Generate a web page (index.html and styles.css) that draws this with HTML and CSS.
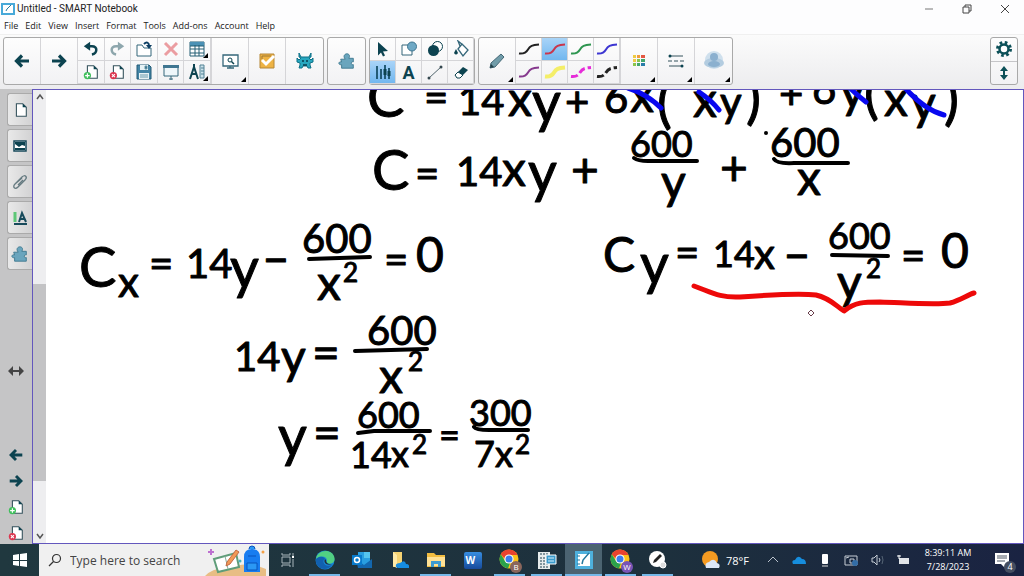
FILE: index.html
```html
<!DOCTYPE html>
<html lang="en">
<head>
<meta charset="utf-8">
<title>Untitled - SMART Notebook</title>
<link rel="stylesheet" href="styles.css">
</head>
<body>
<svg class="defs" aria-hidden="true">
  <defs>
    <symbol id="left" viewBox="0 0 20 20"><path d="M17 10H5M10 4.500 4.500 10 10 15.500" fill="none" stroke="#0c4350" stroke-width="3.200"/></symbol>
    <symbol id="right" viewBox="0 0 20 20"><path d="M3 10h12M10 4.500 15.500 10 10 15.500" fill="none" stroke="#0c4350" stroke-width="3.200"/></symbol>
    <symbol id="page" viewBox="0 0 20 20"><path d="M6 3h7l4 4v10H6z" fill="#fff" stroke="#35525c" stroke-width="1.200"/><path d="M13 3v4h4z" fill="#0c4350"/></symbol>
    <symbol id="page-add" viewBox="0 0 20 20"><use href="#page"/><circle cx="6" cy="14" r="4" fill="#3fbf5c"/><path d="M6 11.500v5M3.500 14h5" stroke="#fff" stroke-width="1.300"/></symbol>
    <symbol id="page-del" viewBox="0 0 20 20"><use href="#page"/><circle cx="6" cy="14" r="4" fill="#dc3750"/><path d="m4.300 12.300 3.400 3.400m0-3.400-3.400 3.400" stroke="#fff" stroke-width="1.200"/></symbol>
    <symbol id="puzzle" viewBox="0 0 20 20"><path d="M3 8h5C5 4 8 2 10 2s4 2 2 5h5v4c-3-1-3 4 0 3v4H4v-4C0 15 0 10 4 11z" fill="#6aa5bd" stroke="#3d788f"/></symbol>
    <symbol id="undo" viewBox="0 0 20 20"><path d="M5 7h6c7 0 6 8 0 9" fill="none" stroke="#0c4350" stroke-width="2.800"/><path d="M2 7l7-5v10z" fill="#0c4350"/></symbol>
    <symbol id="curve" viewBox="0 0 22 14"><path d="M1 11.500C5 12 8 11 10 7.500S14 3 21 2.500" fill="none" stroke="currentColor"/></symbol>
    <symbol id="chrome" viewBox="0 0 22 22"><circle cx="10" cy="10" r="9.500" fill="#fbc318"/><path d="M1.800 5.200A9.500 9.500 0 0 1 18.500 6H10a4 4 0 0 0-4 4z" fill="#e8432f"/><path d="M1.800 5.200 6 12a5 5 0 0 0 5 2l-2 5.500A9.500 9.500 0 0 1 1.800 5.200" fill="#2ba24c"/><circle cx="10" cy="10" r="4.600" fill="#fff"/><circle cx="10" cy="10" r="3.500" fill="#3b7ded"/></symbol>
  </defs>
</svg>
<div class="app">
  <header class="titlebar">
    <svg class="icon-s" viewBox="0 0 14 14" aria-hidden="true"><path d="M0 1h14v12H0z" fill="#48a9d9"/><path d="M2 3h10v8H2z" fill="#fff"/><path d="m5 9 1-2 4-4" stroke="#25789e" fill="none"/></svg>
    <h1 class="title">Untitled - SMART Notebook</h1>
    <div class="window-buttons">
      <button class="window-button" aria-label="Minimize"><svg class="icon-s" viewBox="0 0 14 14"><path d="M3 7h8" stroke="#777"/></svg></button>
      <button class="window-button" aria-label="Restore"><svg class="icon-s" viewBox="0 0 14 14"><path d="M3 5h6v6H3zM5 5V3h6v6H9" fill="none" stroke="#444"/></svg></button>
      <button class="window-button" aria-label="Close"><svg class="icon-s" viewBox="0 0 14 14"><path d="m3 3 8 8m0-8-8 8" stroke="#444"/></svg></button>
    </div>
  </header>
  <nav class="menubar" aria-label="Menu">
    <button class="menu">File</button><button class="menu">Edit</button><button class="menu">View</button><button class="menu">Insert</button><button class="menu">Format</button><button class="menu">Tools</button><button class="menu">Add-ons</button><button class="menu">Account</button><button class="menu">Help</button>
  </nav>
  <div class="toolbar" role="toolbar" aria-label="Tools">
    <div class="group">
      <button class="tool" aria-label="Previous page"><svg class="icon"><use href="#left"/></svg></button>
      <button class="tool" aria-label="Next page"><svg class="icon"><use href="#right"/></svg></button>
      <div class="pairs pairs-5">
        <button class="tool" aria-label="Undo"><svg class="icon-m"><use href="#undo"/></svg></button>
        <button class="tool" aria-label="Redo"><svg class="icon-m faded flip"><use href="#undo"/></svg></button>
        <button class="tool" aria-label="Open"><svg class="icon-m" viewBox="0 0 18 18"><path d="M2 5h5l2 3h7v8H2z" fill="#fff" stroke="#35677a"/><path d="M9 4c3-3 5-1 5 2" fill="none" stroke="#0c3d62" stroke-width="2"/><path d="M11 5h6l-3 4z" fill="#0c3d62"/></svg></button>
        <button class="tool" aria-label="Delete"><svg class="icon-m" viewBox="0 0 18 18"><path d="m3 3 12 12m0-12L3 15" stroke="#eb9da1" stroke-width="3"/></svg></button>
        <button class="tool more" aria-label="Table"><svg class="icon-m" viewBox="0 0 18 18"><path d="M2 2h14v14H2z" fill="#fff" stroke="#245f75"/><path d="M2 2h14v4H2z" fill="#4b91b5"/><path d="M2 6h14M2 9h14M2 13h14M7 5v11M11 5v11" stroke="#245f75"/></svg></button>
        <button class="tool" aria-label="Add page"><svg class="icon-m"><use href="#page-add"/></svg></button>
        <button class="tool" aria-label="Delete page"><svg class="icon-m"><use href="#page-del"/></svg></button>
        <button class="tool" aria-label="Save"><svg class="icon-m" viewBox="0 0 18 18"><path d="M2 2h12l2 2v12H2z" fill="#4485a6" stroke="#235b76"/><path d="M5 2h8v5H5zM4 10h10v6H4z" fill="#e7f2f5"/><path d="M10 3h2v3h-2zM5 12h8M5 14h8" fill="#235b76" stroke="#6a9bad"/></svg></button>
        <button class="tool" aria-label="Screen shade"><svg class="icon-m" viewBox="0 0 18 18"><path d="M2 4h14v9H2z" fill="#eef6fa" stroke="#35677a"/><path d="M1 2h16v3H1z" fill="#3f7691"/><path d="M9 13v4M7 16h4" stroke="#35677a"/></svg></button>
        <button class="tool more" aria-label="Measurement tools"><svg class="icon-m" viewBox="0 0 18 18"><path d="m2 16 4-12 4 12M6 1v4M3 11h6" fill="none" stroke="#0c4350" stroke-width="2"/><path d="M12 2h4v13h-4z" fill="#cbe2eb" stroke="#528294"/><path d="M13 5h3m-3 3h3m-3 3h3" stroke="#528294"/></svg></button>
      </div>
      <button class="tool more" aria-label="Screen"><svg class="icon" viewBox="0 0 20 20"><path d="M3 4h15v11H3zM10 15v2M7 17h7" fill="#fff" stroke="#35677a" stroke-width="1.300"/><circle cx="10" cy="9" r="2" fill="none" stroke="#0c4350"/><path d="m11.500 10.500 2.500 2.500" stroke="#0c4350" stroke-width="1.500"/></svg></button>
      <button class="tool" aria-label="Response"><svg class="icon" viewBox="0 0 20 20"><path d="M3 3h14v14H3z" fill="#eeb344" stroke="#b58637"/><path d="m5 9 4 4 8-8" fill="none" stroke="#fff" stroke-width="3"/><path d="M5 8v-3h9" stroke="#9f7832" fill="none"/></svg></button>
      <button class="tool" aria-label="Activity builder"><svg class="icon" viewBox="0 0 20 20"><path d="M6 6 4 2v4l2 1-2 2-2-2v4l3 1v2l-1 3h3l1-2h4l1 2h3l-1-3v-2l3-1V7l-2 2-2-2 2-1V2l-2 4z" fill="#27a7bf" stroke="#0e7187"/><path d="M8 9v2M12 9v2M8 14h4" stroke="#073e50" stroke-width="1.500"/></svg></button>
    </div>
    <div class="group"><button class="tool" aria-label="Add-ons"><svg class="icon-m"><use href="#puzzle"/></svg></button></div>
    <div class="group">
      <div class="pairs pairs-4">
        <button class="tool" aria-label="Select"><svg class="icon-m" viewBox="0 0 18 18"><path d="m4 2 10 9-5 .500 2 4-2 1-2-4-3 3z" fill="#0c4350"/></svg></button>
        <button class="tool" aria-label="Shapes"><svg class="icon-m" viewBox="0 0 18 18"><path d="M2 5h10v10H2z" fill="#fff" stroke="#35677a"/><circle cx="12" cy="6.500" r="4.500" fill="#6fa9c5" stroke="#3f7691"/></svg></button>
        <button class="tool" aria-label="Fill style"><svg class="icon-m" viewBox="0 0 18 18"><circle cx="11.500" cy="6.500" r="5" fill="#fff" stroke="#0c4350"/><circle cx="7.500" cy="10.500" r="5.500" fill="#0c4350"/></svg></button>
        <button class="tool" aria-label="Fill"><svg class="icon-m" viewBox="0 0 18 18"><path d="m6 9 4-5 6 6-5 6zM8 6 6 1l5 4" fill="#fff" stroke="#35677a" stroke-width="1.300"/><path d="M4 9 2 13q2 3 4 0z" fill="#0c4350"/></svg></button>
        <button class="tool selected" aria-label="Pens"><svg class="icon-m" viewBox="0 0 18 18"><path d="M3 3v13M7 6v10M11 2v14M15 5v11" stroke="#235b76" stroke-width="2"/><path d="M11 6v6M15 8v5" stroke="#0c4350" stroke-width="3"/></svg></button>
        <button class="tool letter" aria-label="Text">A</button>
        <button class="tool" aria-label="Line"><svg class="icon-m" viewBox="0 0 18 18"><path d="M3 15 15 4" stroke="#52666e"/><circle cx="3" cy="15" r="1.500" fill="#34474f"/><circle cx="15" cy="4" r="1.500" fill="#34474f"/></svg></button>
        <button class="tool" aria-label="Eraser"><svg class="icon-m" viewBox="0 0 18 18"><path d="m3 12 8-8 5 3-8 8H5z" fill="#0c4350"/><path d="m3 12 3-3 5 3-3 3H5z" fill="#fff" stroke="#0c4350"/></svg></button>
      </div>
    </div>
    <div class="group">
      <button class="tool more" aria-label="Pen type"><svg class="icon" viewBox="0 0 20 20"><path d="m3 17 1-5 10-9 3 3-9 10z" fill="#719ca9" stroke="#446876"/><path d="m3 17 1-4 3 3z" fill="#223f48"/></svg></button>
      <div class="pairs pairs-4">
        <button class="tool ink-black" aria-label="Black pen"><svg class="swatch"><use href="#curve"/></svg></button>
        <button class="tool selected ink-red" aria-label="Red pen"><svg class="swatch"><use href="#curve"/></svg></button>
        <button class="tool ink-green" aria-label="Green pen"><svg class="swatch"><use href="#curve"/></svg></button>
        <button class="tool ink-blue" aria-label="Blue pen"><svg class="swatch"><use href="#curve"/></svg></button>
        <button class="tool ink-purple" aria-label="Purple pen"><svg class="swatch"><use href="#curve"/></svg></button>
        <button class="tool ink-yellow" aria-label="Yellow highlighter"><svg class="swatch wide"><use href="#curve"/></svg></button>
        <button class="tool ink-magenta" aria-label="Magenta dashes"><svg class="swatch dashed"><use href="#curve"/></svg></button>
        <button class="tool ink-black" aria-label="Black dashes"><svg class="swatch dashed"><use href="#curve"/></svg></button>
      </div>
      <button class="tool more" aria-label="Color"><svg class="icon" viewBox="0 0 20 20"><path d="M4 4h3v3H4zM4 8h3v3H4z" fill="#efcb43"/><path d="M8 4h3v3H8z" fill="#f09d3a"/><path d="M12 4h4v3h-4z" fill="#e45842"/><path d="M8 8h3v3H8zM4 12h3v3H4z" fill="#8bc54b"/><path d="M12 8h4v3h-4zM8 12h3v3H8z" fill="#43a76b"/><path d="M12 12h4v3h-4z" fill="#287da8"/></svg></button>
      <button class="tool more" aria-label="Line style"><svg class="icon" viewBox="0 0 20 20"><path d="M3 5h14M3 15h14" stroke="#35525c"/><path d="M2 10h16" stroke="#35525c" stroke-dasharray="4 2"/><circle cx="4" cy="5" r="1.500" fill="#0c4350"/><circle cx="16" cy="15" r="1.500" fill="#0c4350"/></svg></button>
      <button class="tool more" aria-label="Transparency"><svg class="icon-l" viewBox="0 0 24 24"><circle cx="12" cy="11" r="9" fill="#cfe0ed"/><ellipse cx="12" cy="14" rx="10" ry="5" fill="#b3cce0"/><circle cx="12" cy="8" r="4" fill="#8bb0cf"/><ellipse cx="12" cy="15" rx="6" ry="3" fill="#8bb0cf"/></svg></button>
    </div>
    <div class="group stack">
      <button class="tool" aria-label="Settings"><svg class="icon-m" viewBox="0 0 18 18"><circle cx="9" cy="9" r="6.500" fill="none" stroke="#0c5058" stroke-width="3" stroke-dasharray="2.600 2.500"/><circle cx="9" cy="9" r="4.500" fill="#fff" stroke="#0c5058" stroke-width="2.500"/></svg></button>
      <button class="tool" aria-label="Move toolbar"><svg class="icon-m" viewBox="0 0 18 18"><path d="M9 5v8" stroke="#0c5058" stroke-width="2"/><path d="m9 2 4 5H5zM9 16l4-5H5z" fill="#0c5058"/></svg></button>
    </div>
  </div>
  <main class="workspace">
    <aside class="sidebar">
      <button class="tab" aria-label="Page sorter"><svg class="icon-m"><use href="#page"/></svg></button>
      <button class="tab" aria-label="Gallery"><svg class="icon-m" viewBox="0 0 18 18"><path d="M3 4h12v10H3z" fill="#fff" stroke="#174a5b" stroke-width="1.500"/><path d="M4 5h10v4l-3-1-3 2-4-3zM4 11h10v2H4z" fill="#0c4350"/></svg></button>
      <button class="tab" aria-label="Attachments"><svg class="icon-m" viewBox="0 0 18 18"><path d="m4 11 7-7c3-3 6 0 3 3l-7 7c-3 3-6 0-3-3l7-6M7 12l5-5" fill="none" stroke="#667b81" stroke-width="1.300"/></svg></button>
      <button class="tab" aria-label="Properties"><svg class="icon-m" viewBox="0 0 18 18"><path d="M4 3v10" stroke="#5ec777" stroke-width="3"/><path d="m8 13 3-9 4 9M9 10h5M3 15h13" fill="none" stroke="#174a5b" stroke-width="2"/></svg></button>
      <button class="tab" aria-label="Add-ons"><svg class="icon-m"><use href="#puzzle"/></svg></button>
      <button class="side-button resize" aria-label="Resize sidebar"><svg class="icon-m" viewBox="0 0 18 18"><path d="M4 9h10" stroke="#444" stroke-width="2"/><path d="m1 9 5-5v10zM17 9l-5-5v10z" fill="#444"/></svg></button>
      <div class="side-nav">
        <button class="side-button" aria-label="Previous page"><svg class="icon-m"><use href="#left"/></svg></button>
        <button class="side-button" aria-label="Next page"><svg class="icon-m"><use href="#right"/></svg></button>
        <button class="side-button" aria-label="Add page"><svg class="icon-m"><use href="#page-add"/></svg></button>
        <button class="side-button" aria-label="Delete page"><svg class="icon-m"><use href="#page-del"/></svg></button>
      </div>
    </aside>
    <section class="board" aria-label="Page">
      <div class="scrollbar">
        <svg class="arrow" viewBox="0 0 12 12"><path d="m3 8 3-4 3 4" fill="none" stroke="#555" stroke-width="1.500"/></svg>
        <div class="track"><div class="thumb"></div></div>
        <svg class="arrow" viewBox="0 0 12 12"><path d="m3 4 3 4 3-4" fill="none" stroke="#555" stroke-width="1.500"/></svg>
      </div>
      <svg class="canvas">
        <g transform="translate(-46 -90)">
          <g class="ink">
            <text x="367" y="117" class="tall">C</text><text x="424" y="112">=</text><text x="458" y="115" class="mid">14</text><text x="508" y="116" class="big">x</text><text x="532" y="122" class="tall">y</text><text x="565" y="117">+</text><text x="604" y="113">6</text><text x="630" y="112" class="big">x</text><text x="657" y="122" class="tall">(</text><text x="693" y="117" class="big">x</text><text x="720" y="117">y</text><text x="746" y="118" class="tall">)</text><text x="779" y="109">+</text><text x="812" y="104">6</text><text x="840" y="108" class="big">y</text><text x="864" y="113" class="tall">(</text><text x="884" y="116" class="big">x</text><text x="911" y="120" class="big">y</text><text x="944" y="119" class="tall">)</text>
            <text x="372" y="190" class="tall">C</text><text x="415" y="188">=</text><text x="456" y="186" class="mid">14</text><text x="502" y="186" class="big">x</text><text x="528" y="192" class="tall">y</text><text x="571" y="187" class="big">+</text><text x="630" y="157" class="small">600</text><text x="661" y="199" class="big">y</text><text x="720" y="185" class="big">+</text><text x="770" y="157" class="mid">600</text><text x="797" y="195" class="big">x</text>
            <text x="79" y="287" class="tall">C</text><text x="118" y="297">x</text><text x="149" y="278">=</text><text x="186" y="278" class="mid">14</text><text x="230" y="288" class="tall">y</text><text x="262" y="275" class="big">–</text><text x="302" y="253" class="mid">600</text><text x="317" y="300" class="big">x</text><text x="343" y="282" class="tiny">2</text><text x="384" y="274">=</text><text x="416" y="272" class="big">0</text>
            <text x="603" y="272" class="big">C</text><text x="640" y="284" class="tall">y</text><text x="675" y="267">=</text><text x="713" y="267" class="small">14</text><text x="754" y="269">x</text><text x="783" y="271" class="big">–</text><text x="828" y="249" class="small">600</text><text x="837" y="299" class="big">y</text><text x="866" y="278" class="tiny">2</text><text x="901" y="270">=</text><text x="941" y="268" class="big">0</text>
            <text x="234" y="371" class="mid">14</text><text x="281" y="374" class="big">y</text><text x="312" y="370" class="big">=</text><text x="367" y="345" class="mid">600</text><text x="379" y="393" class="big">x</text><text x="408" y="371" class="tiny">2</text>
            <text x="278" y="456" class="tall">y</text><text x="313" y="450" class="big">=</text><text x="357" y="428" class="small">600</text><text x="350" y="468" class="small">14</text><text x="391" y="467" class="small">x</text><text x="412" y="454" class="tiny">2</text><text x="439" y="448" class="small">=</text><text x="469" y="426" class="small">300</text><text x="474" y="467" class="small">7</text><text x="495" y="467" class="small">x</text><text x="515" y="454" class="tiny">2</text>
          </g>
          <g class="bars"><path d="M634 158q4 3 14 3l49 0"/><path d="M774 159q3 5 20 4l54 0"/><path d="M309 259l61-2"/><path d="M355 351l72-2"/><path d="M358 433l16-2h56"/><path d="M474 427q2 3 15 3h39"/><path d="M832 255l56 1"/></g>
          <circle cx="766" cy="133" r="2"/>
          <g class="cancel"><path d="M628 88Q647 94 661 108"/><path d="M699 92q12 8 20 18"/><path d="M850 88q8 8 16 14"/><path d="M906 89Q925 110 944 115"/></g>
          <path class="brace" d="M694 286C711 292 719 298 740 297C767 295 800 293 816 295C830 298 836 306 844 311C855 302 864 302 880 302C909 303 935 305 950 303C961 300 967 295 974 293"/>
          <path d="m811 310 3 3-3 3-3-3z" fill="#fff" stroke="#683c4a"/>
        </g>
      </svg>
    </section>
  </main>
  <footer class="taskbar">
    <button class="start" aria-label="Start"><svg class="icon-s" viewBox="0 0 14 14"><path d="m0 2 6-1v6H0zM7 1l7-1v7H7zM0 8h6v5l-6-1zM7 8h7v6l-7-1z" fill="#fff"/></svg></button>
    <label class="search">
      <svg class="icon-s" viewBox="0 0 14 14" aria-hidden="true"><circle cx="8.500" cy="5.500" r="4" fill="none" stroke="#333" stroke-width="1.200"/><path d="M5.500 8.500 1 13" stroke="#333" stroke-width="1.200"/></svg>
      <input class="search-input" type="text" placeholder="Type here to search" aria-label="Type here to search">
      <svg class="search-art" viewBox="0 0 64 32" aria-hidden="true"><path d="M0 32q10-10 25-7 14-9 36 0v7z" fill="#e8bd84"/><path d="m9 15 22-6 3 14-21 5z" fill="#fff" stroke="#5f9d79" stroke-width="2"/><path d="m20 12 3 13" stroke="#8aae9b"/><path d="m22 18 9-12 3 2-9 12-4 2z" fill="#f19955" stroke="#c26946"/><path d="M39 28V13q0-8 8-8t8 8v15z" fill="#187df0"/><path d="M44 5q0-3 3-3t3 3M42 19h10v7H42zM43 12h8" fill="#2b98f4" stroke="#0954bc"/><path d="M6 5v6M3 8h6" stroke="#bd70d0" stroke-width="2"/><circle cx="58" cy="8" r="1.500" fill="#f5a044"/><circle cx="35" cy="17" r="1.500" fill="#46b5be"/></svg>
    </label>
    <div class="apps">
      <button class="app-button" aria-label="Task view"><svg class="icon-m" viewBox="0 0 18 18"><path d="M3 6h8v6H3zM3 2v2h8V2M3 16v-2h8v2M14 2v3M14 8v8" fill="none" stroke="#a9b6bb"/><path d="M13 6h2" stroke="#fff" stroke-width="2"/></svg></button>
      <button class="app-button open" aria-label="Edge"><svg class="icon" viewBox="0 0 20 20"><circle cx="10" cy="10" r="9.500" fill="#1785d6"/><path d="M1 9C2-1 18-2 19.500 8c1 6-6 7-8 4C14 7 6 4 1 9" fill="#51cf83"/><path d="M1 9c4-4 9-2 9 0-4 2 0 9 7 6-5 7-15 4-16-3" fill="#1160af"/><path d="M10 9c-2 4 2 7 8 5-3 1-7 0-7-4z" fill="#20333d"/></svg></button>
      <button class="app-button" aria-label="Outlook"><svg class="icon" viewBox="0 0 20 20"><path d="M6 2h12v15H6z" fill="#299fe0"/><path d="m4 9 8 6 8-6v9H6z" fill="#1367ae"/><path d="M12 2h6v6h-6z" fill="#55c5ee"/><path d="M0 5h10v10H0z" fill="#087bcc"/><circle cx="5" cy="10" r="2.500" fill="none" stroke="#fff" stroke-width="1.500"/></svg></button>
      <button class="app-button" aria-label="OneDrive folder"><svg class="icon" viewBox="0 0 20 20"><path d="M4 2h9v15H4z" fill="#f5d373"/><path d="M4 2l4 3v13l-4-2z" fill="#ffe9a7"/><path d="M7 17q-1-4 4-4 5-4 6 1 4 0 3 4H9z" fill="#168ce0"/></svg></button>
      <button class="app-button open" aria-label="File Explorer"><svg class="icon" viewBox="0 0 20 20"><path d="M1 3h7l2 2h9v12H1z" fill="#f2bd41"/><path d="M1 7h18v9H1z" fill="#ffe195"/><path d="M5 11h10v6h-3v-3H8v3H5z" fill="#3d9bd1"/></svg></button>
      <button class="app-button word" aria-label="Word"><span class="word-mark">W</span></button>
      <button class="app-button open" aria-label="Chrome, profile B"><svg class="icon-c"><use href="#chrome"/></svg><span class="profile brown">B</span></button>
      <button class="app-button open" aria-label="Calculator"><svg class="icon" viewBox="0 0 20 20"><path d="M1 2h12v17H1z" fill="#e7ecec"/><path d="M3 4h8M3 8h8M3 11h8M3 14h8M3 17h8" stroke="#82969e" stroke-width="2" stroke-dasharray="2 1"/><path d="M9 5h10v9H9z" fill="#3a9acb" stroke="#fff"/><path d="M11 8h6m-6 3h6" stroke="#d7f2ff"/></svg></button>
      <button class="app-button open current" aria-label="SMART Notebook"><svg class="icon" viewBox="0 0 20 20"><path d="M1 1h18v18H1z" fill="#4eb0dd"/><path d="M4 4h12v12H4z" fill="#fff"/><path d="m8 14 1-4 6-7" fill="none" stroke="#25789e" stroke-width="1.500"/><path d="M3 6h3M3 10h3M3 14h3" stroke="#25789e"/></svg></button>
      <button class="app-button open" aria-label="Chrome, profile W"><svg class="icon-c"><use href="#chrome"/></svg><span class="profile purple">W</span></button>
      <button class="app-button open" aria-label="SMART Ink"><svg class="icon" viewBox="0 0 20 20"><circle cx="9" cy="9" r="8" fill="#fff"/><path d="m5 13 1-3 6-6 2 2-6 6z" fill="#222"/><circle cx="15" cy="15" r="3" fill="#ddd" stroke="#fff"/></svg></button>
    </div>
    <div class="tray">
      <button class="weather"><svg class="icon" viewBox="0 0 20 20" aria-hidden="true"><circle cx="9" cy="9" r="8" fill="#f59b22"/><path d="M5 18q-2-5 3-6 5-5 8 1 4 1 2 5z" fill="#dce7f8"/></svg>78°F</button>
      <button class="tray-button" aria-label="Show hidden icons"><svg class="icon-s" viewBox="0 0 14 14"><path d="m2 9 5-5 5 5" fill="none" stroke="#b9c2cc"/></svg></button>
      <button class="tray-button" aria-label="OneDrive"><svg class="icon-s" viewBox="0 0 14 14"><path d="M1 11Q-1 7 3 7q3-6 7-1 4 0 4 5z" fill="#168ddd"/></svg></button>
      <button class="tray-button" aria-label="Microphone"><svg class="icon-s" viewBox="0 0 14 14"><rect x="4" y="1" width="6" height="10" rx="1" fill="#fff"/><path d="M4 13h6" stroke="#ddd"/></svg></button>
      <button class="tray-button" aria-label="Display"><svg class="icon-s" viewBox="0 0 14 14"><path d="M1 3h12v9H1zM6 6h4v4H6zM2 5l3-1" fill="none" stroke="#c6cdd5"/><circle cx="11" cy="10" r="3" fill="#326da7"/></svg></button>
      <button class="tray-button" aria-label="Volume"><svg class="icon-s" viewBox="0 0 14 14"><path d="M2 5h2l3-3v10L4 9H2zM9 5q2 2 0 4" fill="none" stroke="#c6cdd5"/><path d="M12 3q2 4 0 8" fill="none" stroke="#566576"/></svg></button>
      <button class="tray-button" aria-label="Battery"><svg class="icon-s" viewBox="0 0 14 14"><path d="M3 5h10v6H3z" fill="#e1e4e8"/><path d="M1 3h4M3 2v4" stroke="#fff"/></svg></button>
      <time class="clock" datetime="2023-07-28T08:39:11"><span>8:39:11 AM</span><span>7/28/2023</span></time>
      <button class="notices" aria-label="4 notifications"><svg class="icon-m" viewBox="0 0 18 18"><path d="M2 2h14v11h-4v4l-4-4H2z" fill="#fff"/><path d="M4 5h10M4 7h10M4 10h8" stroke="#4f5867"/></svg><span class="count">4</span></button>
    </div>
  </footer>
</div>
</body>
</html>
```
FILE: styles.css
```css
* { box-sizing: border-box; }
body { margin: 0; font-family: "Open Sans", "Noto Sans", sans-serif; font-size: 10px; color: #222; }
button { border: 0; padding: 0; margin: 0; background: none; font: inherit; color: inherit; }
svg { display: block; flex: none; }
.defs { position: absolute; width: 0; height: 0; }
.icon-s { width: 14px; height: 14px; }
.icon-m { width: 18px; height: 18px; }
.icon { width: 20px; height: 20px; }
.icon-c { width: 22px; height: 22px; }
.icon-l { width: 24px; height: 24px; }
.app { display: flex; flex-direction: column; height: 100vh; min-height: 480px; overflow: hidden; background: #fdfdfe; }

.titlebar { display: flex; align-items: center; height: 18px; gap: 2px; padding-left: 1px; }
.title { margin: 0; font-family: "Roboto", sans-serif; font-size: 10px; font-weight: 400; line-height: 18px; }
.window-buttons { display: flex; margin-left: auto; }
.window-button { display: flex; justify-content: center; width: 38px; }
.menubar { display: flex; gap: 7px; height: 16px; padding-left: 4px; }
.menu { font-size: 9px; line-height: 16px; }

.toolbar { display: flex; gap: 3px; padding: 2px 6px 4px 3px; background: linear-gradient(#fbfbfb, #ececee); border-top: 1px solid #f0f0f0; }
.group { display: flex; height: 48px; border: 1px solid #a9a9a9; border-radius: 3px; background: linear-gradient(#fdfdfd, #f2f2f4); }
.tool { position: relative; display: flex; align-items: center; justify-content: center; width: 37px; border-right: 1px solid #d5d5d8; }
.group > .tool:last-child { border-right: 0; }
.pairs { display: grid; grid-template-rows: 1fr 1fr; border-right: 1px solid #d5d5d8; }
.pairs-5 { grid-template-columns: repeat(5, 1fr); width: 134px; }
.pairs-4 { grid-template-columns: repeat(4, 26px); }
.pairs:last-child { border-right: 0; }
.pairs .tool { width: auto; border-bottom: 1px solid #d5d5d8; }
.more::after { content: ""; position: absolute; right: 2px; bottom: 2px; border-style: solid; border-width: 0 0 5px 5px; border-color: transparent transparent #000; }
.selected { background: linear-gradient(#a9d4f8, #72b7ef); }
.letter { font: 700 18px "Roboto", sans-serif; color: #0c4350; }
.faded { opacity: 0.45; }
.flip { transform: scaleX(-1); }
.swatch { width: 22px; height: 14px; stroke-width: 2px; }
.wide { stroke-width: 4px; }
.dashed { stroke-width: 3px; stroke-dasharray: 7 3; }
.ink-black { color: #222; }
.ink-red { color: #c9364c; }
.ink-green { color: #2e9650; }
.ink-blue { color: #3d36d2; }
.ink-purple { color: #86398e; }
.ink-yellow { color: #f4ee69; }
.ink-magenta { color: #e62bd8; }
.stack { flex-direction: column; margin-left: auto; }
.stack .tool { flex: 1; width: 26px; border-right: 0; }
.stack .tool:first-child { border-bottom: 1px solid #c5c5c8; }

.workspace { display: flex; flex: 1; min-height: 0; }
.sidebar { display: flex; flex-direction: column; gap: 3px; width: 32px; padding: 4px 0 2px; background: #c5c5c6; }
.tab { display: flex; flex: none; align-items: center; justify-content: center; height: 33px; margin-left: 7px; border: 1px solid #aaa; border-right: 0; border-radius: 3px 0 0 3px; background: linear-gradient(90deg, #e9e9e9, #d2d2d3); }
.side-button { display: flex; justify-content: center; }
.resize { margin-top: 89px; }
.side-nav { display: flex; flex-direction: column; gap: 8px; margin-top: auto; }
.board { display: flex; flex: 1; min-width: 0; border: 1px solid #6357bd; background: #fff; }
.scrollbar { display: flex; flex-direction: column; align-items: center; width: 13px; background: #eeeef0; }
.arrow { width: 12px; height: 14px; }
.track { display: flex; flex: 1; flex-direction: column; width: 100%; padding: 180px 0 48px; }
.thumb { flex: 1; background: #c3c3c5; }
.canvas { flex: 1; min-width: 0; height: 100%; overflow: hidden; }
.ink { font-family: "Lato", sans-serif; font-size: 42px; stroke: #000; stroke-width: 1px; stroke-linejoin: round; }
.ink .tall { font-size: 56px; }
.ink .big { font-size: 48px; }
.ink .mid { font-size: 40px; }
.ink .small { font-size: 36px; }
.ink .tiny { font-size: 26px; }
.bars, .cancel, .brace { fill: none; stroke: #000; stroke-width: 5px; stroke-linecap: round; stroke-linejoin: round; }
.bars { stroke-width: 4px; }
.cancel { stroke: #0808f0; }
.brace { stroke: #ed0909; }

.taskbar { display: flex; height: 32px; background: linear-gradient(90deg, #20383f, #1d303d 65%, #1a2342); color: #fff; }
.start { display: flex; align-items: center; justify-content: center; width: 39px; }
.search { display: flex; align-items: center; gap: 8px; width: 230px; padding-left: 9px; background: #f0f0f0; }
.search-input { flex: 1; min-width: 0; padding: 0; border: 0; background: none; font: 12px "Open Sans", sans-serif; color: #333; }
.search-input::placeholder { color: #444; opacity: 1; }
.search-art { width: 64px; height: 32px; }
.apps { display: flex; }
.app-button { position: relative; display: flex; align-items: center; justify-content: center; width: 37px; }
.open::after { content: ""; position: absolute; right: 3px; bottom: 0; left: 3px; height: 2px; background: #75b8e8; }
.current { background: #4b6371; }
.current::after { right: 0; left: 0; }
.word-mark { width: 18px; height: 17px; padding-left: 2px; border-radius: 2px; background: linear-gradient(#378de0, #174b9c); font-size: 10px; font-weight: 700; line-height: 17px; text-align: left; }
.profile { position: absolute; right: 6px; bottom: 3px; width: 12px; height: 12px; border-radius: 50%; font-size: 8px; line-height: 12px; text-align: center; }
.brown { background: #8a665c; }
.purple { background: #7854b6; }
.tray { display: flex; align-items: center; margin-left: auto; }
.weather { display: flex; align-items: center; gap: 5px; margin-right: 11px; font-size: 11px; }
.tray-button { display: flex; justify-content: center; width: 26px; }
.clock { display: flex; flex-direction: column; align-items: center; width: 64px; font-size: 9px; line-height: 14px; }
.notices { position: relative; display: flex; justify-content: center; width: 44px; }
.count { position: absolute; right: 8px; bottom: -4px; width: 12px; height: 12px; border-radius: 50%; background: #454e60; font-size: 9px; line-height: 12px; }
```
